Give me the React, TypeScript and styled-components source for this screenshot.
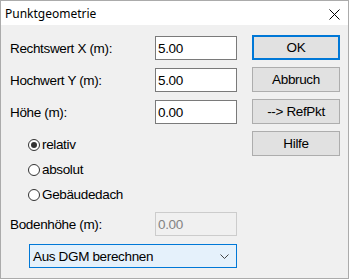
import React from 'react'
import styled, { createGlobalStyle } from 'styled-components'

const GlobalStyle = createGlobalStyle`
  html, body {
    margin: 0;
    padding: 0;
    background: #ffffff;
  }
  body {
    font-family: "Liberation Sans", Arial, sans-serif;
    font-size: 13.5px;
    letter-spacing: -0.35px;
    color: #000000;
  }
`

const App: React.FC = () => {
  return (
    <>
      <GlobalStyle />
      <Window>
        <TitleBar>
          <Title>Punktgeometrie</Title>
          <CloseButton>
            <svg width="11" height="11" viewBox="0 0 11 11">
              <path d="M0.5 0.5 L10.5 10.5 M10.5 0.5 L0.5 10.5" stroke="#000" strokeWidth="1" />
            </svg>
          </CloseButton>
        </TitleBar>
        <Body>
          <Form>
            <FieldRow>
              <Label>Rechtswert X (m):</Label>
              <Field>5.00</Field>
            </FieldRow>
            <FieldRow>
              <Label>Hochwert Y (m):</Label>
              <Field>5.00</Field>
            </FieldRow>
            <FieldRow>
              <Label>Höhe (m):</Label>
              <Field>0.00</Field>
            </FieldRow>
            <RadioGroup>
              <RadioItem>
                <RadioCircle checked />
                relativ
              </RadioItem>
              <RadioItem>
                <RadioCircle />
                absolut
              </RadioItem>
              <RadioItem>
                <RadioCircle />
                Gebäudedach
              </RadioItem>
            </RadioGroup>
            <FieldRow>
              <Label>Bodenhöhe (m):</Label>
              <Field disabled>0.00</Field>
            </FieldRow>
            <Select>
              Aus DGM berechnen
              <svg width="9" height="5" viewBox="0 0 9 5">
                <polyline points="0.5,0.5 4.5,4.5 8.5,0.5" fill="none" stroke="#444" strokeWidth="1" />
              </svg>
            </Select>
          </Form>
          <ButtonColumn>
            <Button primary>OK</Button>
            <Button>Abbruch</Button>
            <Button>--&gt; RefPkt</Button>
            <Button>Hilfe</Button>
          </ButtonColumn>
        </Body>
      </Window>
    </>
  )
}

const Window = styled.div`
  width: 349px;
  height: 279px;
  box-sizing: border-box;
  border: 1px solid #ababab;
  display: flex;
  flex-direction: column;
  background: #f0f0f0;
`

const TitleBar = styled.div`
  height: 24px;
  background: #ffffff;
  display: flex;
  align-items: center;
  justify-content: space-between;
  padding: 0 8px 0 4px;
`

const Title = styled.div`
  font-family: "Noto Sans", "Open Sans", sans-serif;
  font-size: 12px;
  letter-spacing: 0;
  color: #000000;
`

const CloseButton = styled.div`
  width: 11px;
  height: 11px;
  display: flex;
  margin-top: 3px;
`

const Body = styled.div`
  flex: 1;
  display: flex;
  gap: 15px;
  padding: 10px 8px 0 9px;
`

const Form = styled.div`
  width: 227px;
  display: flex;
  flex-direction: column;
  padding-top: 1px;
`

const FieldRow = styled.div`
  display: grid;
  grid-template-columns: 145px 82px;
  align-items: center;
  height: 24px;
  margin-bottom: 8px;
`

const Label = styled.div`
  white-space: nowrap;
`

const Field = styled.div<{ disabled?: boolean }>`
  height: 24px;
  box-sizing: border-box;
  border: 1px solid ${(p) => (p.disabled ? '#cccccc' : '#7a7a7a')};
  background: ${(p) => (p.disabled ? '#f0f0f0' : '#ffffff')};
  color: ${(p) => (p.disabled ? '#838383' : '#000000')};
  padding: 0 2px;
  display: flex;
  align-items: center;
`

const RadioGroup = styled.div`
  display: flex;
  flex-direction: column;
  margin: 0 0 5px 18px;
`

const RadioItem = styled.div`
  height: 25px;
  display: flex;
  align-items: center;
  gap: 2px;
`

const RadioCircle = styled.span<{ checked?: boolean }>`
  width: 12px;
  height: 12px;
  box-sizing: border-box;
  border: 1px solid #333333;
  border-radius: 50%;
  background: #ffffff;
  display: flex;
  align-items: center;
  justify-content: center;
  &::after {
    content: '';
    width: 6px;
    height: 6px;
    border-radius: 50%;
    background: ${(p) => (p.checked ? '#333333' : 'transparent')};
  }
`

const Select = styled.div`
  margin: 0 0 0 19px;
  height: 24px;
  box-sizing: border-box;
  border: 1px solid #0078d7;
  background: #e5f1fb;
  display: flex;
  align-items: center;
  justify-content: space-between;
  padding: 0 7px 0 3px;
`

const ButtonColumn = styled.div`
  width: 88px;
  display: flex;
  flex-direction: column;
  gap: 7px;
`

const Button = styled.div<{ primary?: boolean }>`
  height: 25px;
  box-sizing: border-box;
  border: ${(p) => (p.primary ? '2px solid #0078d7' : '1px solid #adadad')};
  background: #e1e1e1;
  display: flex;
  align-items: center;
  justify-content: center;
`

export default App
